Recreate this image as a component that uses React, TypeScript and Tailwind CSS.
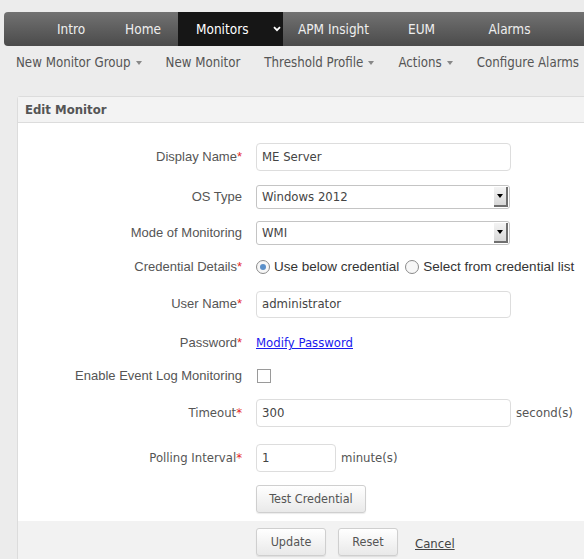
import React from "react";

const cond = { fontFamily: '"DejaVu Sans Condensed", "DejaVu Sans", sans-serif', fontStretch: "condensed" } as React.CSSProperties;

function Req() {
  return <span className="text-[#e52b2b]">*</span>;
}

function Caret() {
  return <span className="ml-[5px] inline-block border-x-[3.5px] border-t-[4px] border-x-transparent border-t-[#888] align-middle" />;
}

function Select({ value }: { value: string }) {
  return (
    <div className="flex h-[24px] w-[254px] items-center justify-between rounded-[3px] border border-[#c4c4c4] bg-white pl-[5px] pr-[1px] text-[13px] text-[#444]" style={cond}>
      <span>{value}</span>
      <span className="flex h-[20px] w-[14px] items-center justify-center border-r-2 border-b-2 border-[#6f6f6f] bg-gradient-to-b from-[#f4f4f4] to-[#d8d8d8]">
        <span className="border-x-[3px] border-t-[4px] border-x-transparent border-t-black" />
      </span>
    </div>
  );
}

function Row({ h, label, children, c }: { h: string; label: React.ReactNode; children: React.ReactNode; c?: boolean }) {
  return (
    <div className={`flex items-center ${h}`}>
      <div className="w-[225px] pr-[1px] text-right text-[13px] text-[#555]" style={c ? cond : undefined}>{label}</div>
      <div className="ml-[13px] flex items-center">{children}</div>
    </div>
  );
}

function Btn({ children, w }: { children: React.ReactNode; w: string }) {
  return (
    <button className={`flex h-[28px] ${w} items-center justify-center rounded-[3px] border border-[#cfcfcf] bg-gradient-to-b from-white to-[#e9e9e9] text-[12.5px] text-[#555] shadow-[0_1px_1px_rgba(0,0,0,0.08)]`} style={cond}>
      {children}
    </button>
  );
}

export default function App() {
  const nav = [
    { t: "Intro", w: "w-[70px]" },
    { t: "Home", w: "w-[74px]" },
  ];
  return (
    <div className="h-[559px] w-[584px] overflow-hidden bg-[#ececec] pt-[12px]" style={{ fontFamily: '"Liberation Sans", Arial, sans-serif' }}>
      <div className="ml-[4px] flex h-[34px] w-[700px] items-center rounded-l-[4px] bg-gradient-to-b from-[#727272] to-[#4b4b4b] pl-[32px] text-[13.5px] text-[#eeeeee]" style={cond}>
        {nav.map((n) => (
          <div key={n.t} className={`${n.w} text-center`}>{n.t}</div>
        ))}
        <div className="-ml-[2px] flex h-full w-[105px] items-center bg-[#161616] pl-[18px] text-white">
          <span>Monitors</span>
          <svg className="ml-[24px]" width="8" height="6" viewBox="0 0 8 6">
            <path d="M1 1.2 L4 4.2 L7 1.2" stroke="#fff" strokeWidth="1.8" fill="none" />
          </svg>
        </div>
        <div className="w-[101px] text-center">APM Insight</div>
        <div className="w-[75px] text-center">EUM</div>
        <div className="w-[101px] text-center">Alarms</div>
      </div>

      <div className="flex h-[34px] items-center gap-[24px] pl-[16px] text-[13.2px] whitespace-nowrap text-[#555]" style={cond}>
        <span>New Monitor Group<Caret /></span>
        <span>New Monitor</span>
        <span>Threshold Profile<Caret /></span>
        <span>Actions<Caret /></span>
        <span>Configure Alarms</span>
      </div>

      <div className="mt-[16px] ml-[17px] w-[640px] rounded-tl-[3px] border border-[#dcdcdc] bg-white">
        <div className="flex h-[26px] items-center border-b border-[#dcdcdc] bg-[#f3f3f3] pl-[7px] text-[13px] font-bold text-[#555]" style={cond}>
          Edit Monitor
        </div>
        <div className="pt-[16px]">
          <Row h="h-[36px]" label={<>Display Name<Req /></>}>
            <div className="flex h-[28px] w-[255px] items-center rounded-[4px] border border-[#dddddd] pl-[5px] text-[13px] text-[#444]" style={cond}>ME Server</div>
          </Row>
          <Row h="h-[44px]" label="OS Type">
            <Select value="Windows 2012" />
          </Row>
          <Row h="h-[28px]" label="Mode of Monitoring">
            <Select value="WMI" />
          </Row>
          <Row h="h-[40px]" label={<>Credential Details<Req /></>}>
            <div className="flex items-center text-[13.5px] text-[#333] whitespace-nowrap">
              <span className="flex h-[14px] w-[14px] items-center justify-center rounded-full border border-[#8a8a8a] bg-[#f7f7f7]">
                <span className="h-[6px] w-[6px] rounded-full bg-[#5a8fc9]" />
              </span>
              <span className="ml-[4px]">Use below credential</span>
              <span className="ml-[6px] h-[14px] w-[14px] rounded-full border border-[#8a8a8a] bg-[#f7f7f7]" />
              <span className="ml-[4px]">Select from credential list</span>
            </div>
          </Row>
          <Row h="h-[34px]" label={<>User Name<Req /></>}>
            <div className="flex h-[27px] w-[255px] items-center rounded-[4px] border border-[#dddddd] pl-[5px] text-[13px] text-[#444]" style={cond}>administrator</div>
          </Row>
          <Row h="h-[44px]" label={<>Password<Req /></>}>
            <a href="#" className="text-[13px] text-[#1a1aee] underline" style={cond}>Modify Password</a>
          </Row>
          <Row h="h-[22px]" label="Enable Event Log Monitoring">
            <span className="ml-[1px] h-[14px] w-[14px] border border-[#9a9a9a] bg-white" />
          </Row>
          <Row h="h-[52px]" c label={<>Timeout<Req /></>}>
            <div className="flex h-[28px] w-[255px] items-center rounded-[4px] border border-[#dddddd] pl-[5px] text-[13px] text-[#444]" style={cond}>300</div>
            <span className="ml-[5px] text-[13px] text-[#555]" style={cond}>second(s)</span>
          </Row>
          <Row h="h-[38px]" c label={<>Polling Interval<Req /></>}>
            <div className="flex h-[28px] w-[80px] items-center rounded-[4px] border border-[#dddddd] pl-[5px] text-[13px] text-[#444]" style={cond}>1</div>
            <span className="ml-[5px] text-[13px] text-[#555]" style={cond}>minute(s)</span>
          </Row>
          <Row h="h-[44px]" label="">
            <Btn w="w-[110px]">Test Credential</Btn>
          </Row>
        </div>
        <div className="flex h-[40px] items-start bg-[#f2f2f2] pt-[7px] pl-[238px]">
          <Btn w="w-[70px]">Update</Btn>
          <div className="ml-[12px]"><Btn w="w-[60px]">Reset</Btn></div>
          <a href="#" className="ml-[17px] mt-[6px] text-[13px] text-[#444] underline" style={cond}>Cancel</a>
        </div>
      </div>
    </div>
  );
}
